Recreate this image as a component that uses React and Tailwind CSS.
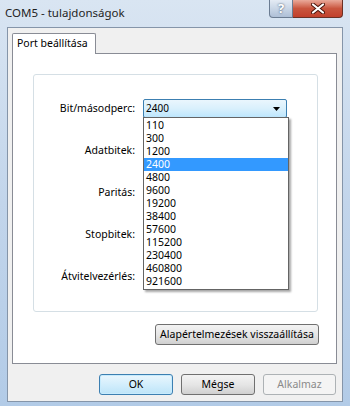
const rates = ['110', '300', '1200', '2400', '4800', '9600', '19200', '38400', '57600', '115200', '230400', '460800', '921600']
const labels = ['Bit/másodperc:', 'Adatbitek:', 'Paritás:', 'Stopbitek:', 'Átvitelvezérlés:']

function Combo({ value, open }) {
  return (
    <div className={`h-[19px] w-[144px] rounded-[2px] border flex items-center pl-[2px] pr-[6px] ${open ? 'border-[#3c7fb1] bg-gradient-to-b from-[#eaf6fd] via-[#d9f0fc] to-[#bde6fd]' : 'border-[#707070] bg-gradient-to-b from-[#f2f2f2] to-[#dcdcdc]'}`}>
      <span className="flex-1">{value}</span>
      <svg width="7" height="4" viewBox="0 0 7 4"><path d="M0 0h7L3.5 4z" fill="#000" /></svg>
    </div>
  )
}

export default function App() {
  return (
    <div className="w-[350px] h-[406px] bg-gradient-to-b from-[#d9e5f2] via-[#c2d5eb] to-[#b2cbe7] font-['Noto_Sans',sans-serif] text-[10px] text-black relative overflow-hidden">
      <div className="h-[27px] pl-[5px] pb-[2px] flex items-center text-[11.5px] text-[#1e1e1e]">COM5 - tulajdonságok</div>

      <div className="absolute top-0 right-[7px] flex h-[18px]">
        <div className="w-[24px] h-full rounded-bl-[4px] border border-t-0 border-[#6b7c92] bg-gradient-to-b from-[#e4ebf4] via-[#c9d6e6] to-[#aebfd6] flex items-center justify-center text-white font-bold text-[13px] leading-none [text-shadow:0_0_2px_#2b3e57]">?</div>
        <div className="w-[50px] h-full rounded-br-[4px] border border-t-0 border-l-0 border-[#6b3025] bg-gradient-to-b from-[#e9a99a] via-[#c9553e] to-[#c2402c] flex items-center justify-center">
          <svg width="14" height="11" viewBox="0 0 14 11">
            <path d="M2 1.5l10 8M12 1.5l-10 8" stroke="#4a1208" strokeWidth="4" strokeLinecap="round" />
            <path d="M2 1.5l10 8M12 1.5l-10 8" stroke="#fff" strokeWidth="2.2" strokeLinecap="round" />
          </svg>
        </div>
      </div>

      <div className="ml-[7px] w-[336px] h-[375px] bg-[#f0f0f0] border border-[#8595a9] flex flex-col">
        <div className="pt-[5px] pl-[4px]">
          <div className="w-[84px] h-[21px] bg-white border border-b-0 border-[#898c95] rounded-t-[2px] flex items-center pl-[4px] text-[10.5px] relative z-10 -mb-px">Port beállítása</div>
          <div className="w-[325px] h-[311px] bg-white border border-[#898c95] flex flex-col">
            <div className="ml-[20px] mt-[20px] w-[285px] h-[238px] border border-[#d5dfe5] rounded-[3px] flex flex-col gap-[23px] pt-[24px]">
              {labels.map((l, i) => (
                <div key={l} className="flex items-center">
                  <div className="w-[101px] text-right text-[10.5px]">{l}</div>
                  <div className="ml-[8px] relative">
                    <Combo value={i === 0 ? '2400' : ''} open={i === 0} />
                    {i === 0 && (
                      <div className="absolute left-0 top-[18px] w-[146px] bg-white border border-[#646464] shadow-[2px_2px_2px_rgba(0,0,0,0.35)] z-20 py-px text-[10.5px]">
                        {rates.map(r => (
                          <div key={r} className={`h-[13px] leading-[13px] pl-[2px] ${r === '2400' ? 'bg-[#3399ff] text-white' : ''}`}>{r}</div>
                        ))}
                      </div>
                    )}
                  </div>
                </div>
              ))}
            </div>
            <div className="flex justify-end pr-[17px] mt-[12px]">
              <div className="w-[164px] h-[21px] rounded-[3px] border border-[#707070] bg-gradient-to-b from-[#f3f3f3] via-[#e6e6e6] to-[#d0d0d0] flex items-center justify-center text-[10.5px]">Alapértelmezések visszaállítása</div>
            </div>
          </div>
        </div>
        <div className="flex justify-end gap-[8px] pr-[6px] mt-[10px]">
          <div className="w-[74px] h-[21px] rounded-[3px] border border-[#3c7fb1] bg-gradient-to-b from-[#eaf6fd] via-[#d3eefc] to-[#bde4f8] shadow-[inset_0_0_0_1px_#c7ebfd] flex items-center justify-center text-[10.5px]">OK</div>
          <div className="w-[74px] h-[21px] rounded-[3px] border border-[#707070] bg-gradient-to-b from-[#f3f3f3] via-[#e6e6e6] to-[#d0d0d0] flex items-center justify-center text-[10.5px]">Mégse</div>
          <div className="w-[73px] h-[21px] rounded-[3px] border border-[#adb2b5] bg-[#f4f4f4] flex items-center justify-center text-[10.5px] text-[#8a8a8a]">Alkalmaz</div>
        </div>
      </div>
    </div>
  )
}
